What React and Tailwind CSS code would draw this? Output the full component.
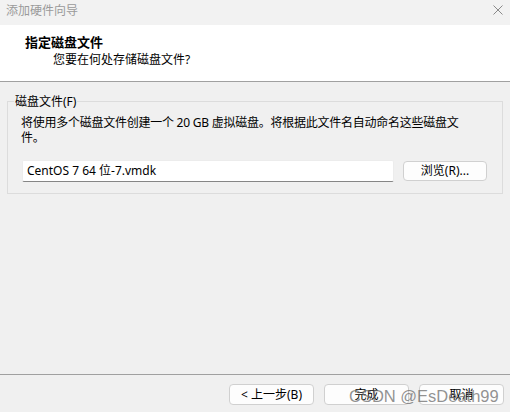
import React from "react";

const font = { fontFamily: '"Noto Sans", "Noto Sans CJK SC", sans-serif' };

function Btn({ children, className = "" }) {
  return (
    <div
      className={
        "flex h-[21px] w-[85px] items-center justify-center rounded-[4px] border border-[#d0d0d0] bg-[#fdfdfd] text-[12px] leading-[15px] text-black " +
        className
      }
    >
      {children}
    </div>
  );
}

export default function App() {
  return (
    <div
      className="relative flex h-[412px] w-[510px] flex-col overflow-hidden bg-[#f0f0f0] text-[12px] text-black"
      style={font}
    >
      {/* title bar */}
      <div className="flex h-[25px] shrink-0 justify-between bg-[#f2f2f2]">
        <div className="pl-[6px] text-[12px] leading-[22px] text-[#9a9a9a]">添加硬件向导</div>
        <svg className="mr-[7px] mt-[5px]" width="10" height="10" viewBox="0 0 10 10">
          <path d="M0.5 0.5 L9.5 9.5 M9.5 0.5 L0.5 9.5" stroke="#8a8a8a" strokeWidth="1" fill="none" />
        </svg>
      </div>

      {/* header */}
      <div className="flex h-[57px] shrink-0 flex-col border-b border-[#a0a0a0] bg-white pt-[9px]">
        <div className="pl-[25px] text-[13px] font-bold leading-[16px]">指定磁盘文件</div>
        <div className="mt-[2px] pl-[53px] text-[12px] leading-[15px]">您要在何处存储磁盘文件?</div>
      </div>

      {/* body */}
      <div className="flex-1">
        <fieldset className="mx-[7px] mt-[12px] border border-[#dcdcdc] pb-[11px] pl-[13px] pr-[15px]">
          <legend className="ml-[-7px] px-[1px] text-[12px] leading-[15px]">磁盘文件(F)</legend>
          <div className="pt-[6px] text-[12px] leading-[15px] tracking-[-0.25px]">
            将使用多个磁盘文件创建一个 20 GB 虚拟磁盘。将根据此文件名自动命名这些磁盘文
            <br />
            件。
          </div>
          <div className="mt-[15px] flex items-center gap-[9px]">
            <div className="ml-[1px] flex h-[22px] flex-1 items-center rounded-[2px] border border-[#ececec] border-b-[#868686] bg-white pl-[4px] text-[12px]">
              CentOS 7 64 位-7.vmdk
            </div>
            <div className="flex h-[20px] w-[84px] items-center justify-center rounded-[4px] border border-[#d0d0d0] bg-[#fdfdfd] text-[12px]">
              浏览(R)...
            </div>
          </div>
        </fieldset>
      </div>

      {/* footer */}
      <div className="flex h-[38px] shrink-0 justify-end gap-[10px] border-t border-[#a0a0a0] pr-[6px] pt-[9px]">
        <Btn>&lt; 上一步(B)</Btn>
        <Btn>完成</Btn>
        <Btn>取消</Btn>
      </div>

      {/* watermark */}
      <div
        className="pointer-events-none absolute left-[349px] top-[386px] text-[16.5px] leading-[20px] text-[rgba(110,110,110,0.75)]"
        style={{ fontFamily: '"Liberation Sans", Arial, sans-serif' }}
      >
        CSDN @EsDeath99
      </div>
    </div>
  );
}
